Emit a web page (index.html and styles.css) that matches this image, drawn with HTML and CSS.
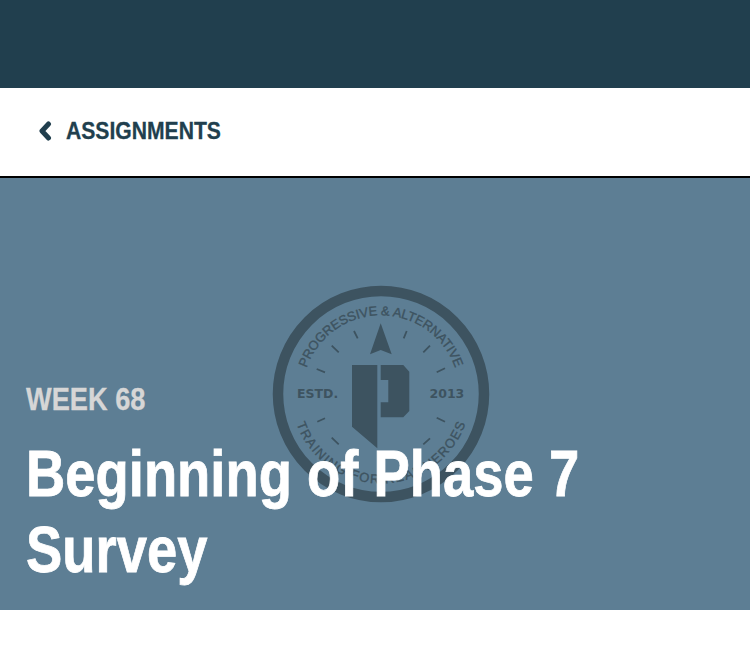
FILE: index.html
```html
<!DOCTYPE html>
<html lang="en">
<head>
<meta charset="utf-8">
<title>Beginning of Phase 7 Survey</title>
<link rel="stylesheet" href="styles.css">
</head>
<body>
<header class="topbar"></header>
<nav class="nav">
  <a class="back" href="#">
    <svg class="chevron" viewBox="0 0 14 20" width="14" height="20" aria-hidden="true"><path d="M10.500 3 4 10l6.500 7" fill="none" stroke="currentColor" stroke-width="5" stroke-linecap="round" stroke-linejoin="round"/></svg>
    <span class="back-label">ASSIGNMENTS</span>
  </a>
</nav>
<section class="hero">
  <svg class="badge" viewBox="0 0 218 218" width="218" height="218" aria-hidden="true">
    <defs>
      <path id="arcTop" d="M30.300 109a78.700 78.700 0 0 1 157.400 0"/>
      <path id="arcBottom" d="M19.500 109a89.500 89.500 0 0 0 179 0"/>
    </defs>
    <circle class="ring" cx="109" cy="109" r="103"/>
    <text class="arc-text"><textPath href="#arcTop" startOffset="50%" text-anchor="middle" textLength="194" lengthAdjust="spacing">PROGRESSIVE &amp; ALTERNATIVE</textPath></text>
    <text class="arc-text"><textPath href="#arcBottom" startOffset="50%" text-anchor="middle" textLength="220" lengthAdjust="spacing">TRAINING FOR REAL HEROES</textPath></text>
    <path class="ticks" d="M82 46l3.700 7.300M134.700 46l-3 7.300M59.700 60.700l7 6.600M158 60.700l-6.700 6.600M44.700 84l8.300 3.300M173 83.300l-8.300 4M45.300 136.700l7.700-3.400M173 136.700l-8.300-4M59.700 152.700l7 6.600M158 153.300l-6.700 6"/>
    <path class="mark" d="M108.700 38.300 119.700 69.300 108.700 65 98 69.300z"/>
    <path class="mark" d="M80 80h25.300v83.300L80 141.700zM108.700 80h22.600l6 6.700V126l-6 6.300h-22.600v-15h7.600V95h-7.600z"/>
    <text class="side" x="25" y="113.300">ESTD.</text>
    <text class="side" x="157.500" y="113.300">2013</text>
  </svg>
  <div class="hero-copy">
    <p class="week">WEEK 68</p>
    <h1 class="title">Beginning of Phase 7 Survey</h1>
  </div>
</section>
</body>
</html>
```
FILE: styles.css
```css
* { box-sizing: border-box; }
html, body { margin: 0; padding: 0; }
body {
  background: #fff;
  font-family: "Liberation Sans", sans-serif;
  height: 653px;
  overflow: hidden;
}
.topbar { height: 88px; background: #213f4e; }
.nav {
  height: 90px;
  border-bottom: 2px solid #000;
  display: flex;
  align-items: center;
  padding: 0 0 2px 38px;
}
.back {
  display: flex;
  align-items: center;
  gap: 14px;
  color: #213f4e;
  text-decoration: none;
  font-size: 24px;
  font-weight: 700;
}
.back-label {
  display: block;
  transform: scaleX(0.88);
  transform-origin: left center;
  -webkit-text-stroke: 0.3px currentColor;
}
.chevron { display: block; }
.hero {
  position: relative;
  height: 432px;
  background: #5d7e94;
  display: flex;
  flex-direction: column;
  justify-content: flex-end;
  padding: 0 26px 22px;
}
.badge { position: absolute; left: 272px; top: 107px; }
.ring { fill: none; stroke: #3d5360; stroke-width: 10.500; }
.arc-text {
  fill: #3d5360;
  stroke: #3d5360;
  stroke-width: 0.35px;
  font-family: "Liberation Sans", sans-serif;
  font-size: 13px;
}
.ticks { stroke: #3d5360; stroke-width: 1.800; fill: none; }
.mark { fill: #3d5360; }
.side {
  fill: #3d5360;
  font-family: "DejaVu Sans", sans-serif;
  font-size: 12.500px;
  font-weight: 700;
}
.hero-copy {
  position: relative;
  width: 680px;
  transform: scaleX(0.85);
  transform-origin: left bottom;
}
.week {
  margin: 0 0 18px;
  color: #d6d6d6;
  font-size: 32px;
  font-weight: 700;
  line-height: 38px;
  -webkit-text-stroke: 0.3px currentColor;
}
.title {
  margin: 0;
  color: #fff;
  font-size: 64px;
  font-weight: 700;
  line-height: 76px;
  -webkit-text-stroke: 0.8px currentColor;
}
```
